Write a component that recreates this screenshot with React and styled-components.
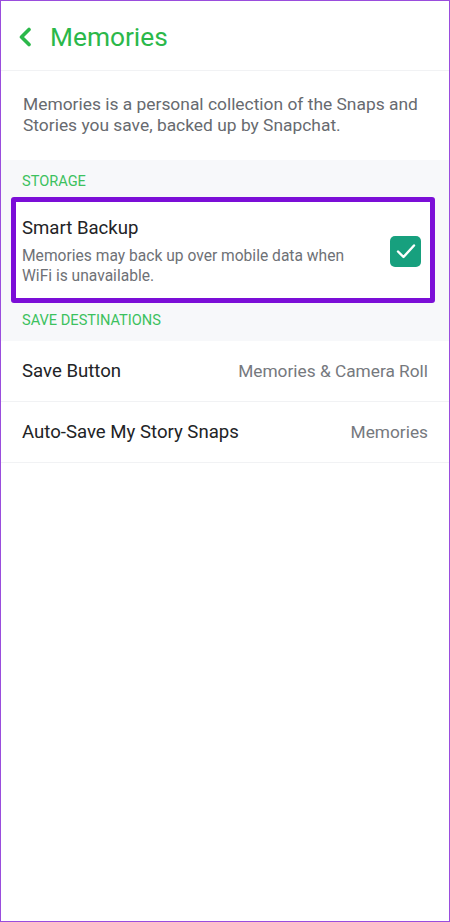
import styled, { createGlobalStyle } from "styled-components";

const GlobalStyle = createGlobalStyle`
  html, body {
    margin: 0;
    padding: 0;
    background: #ffffff;
  }
  body {
    font-family: Roboto, "Noto Sans", "Liberation Sans", sans-serif;
  }
`;

// 화면 전체 프레임
const Frame = styled.div`
  box-sizing: border-box;
  width: 450px;
  height: 922px;
  border: 1px solid #9a4ddd;
  background: #ffffff;
  overflow: hidden;
`;

const Header = styled.div`
  display: flex;
  align-items: center;
  gap: 18px;
  height: 70px;
  padding: 2px 0 0 17px;
  box-sizing: border-box;
  border-bottom: 1px solid #f1f2f4;
`;

const BackButton = styled.button`
  display: flex;
  align-items: center;
  justify-content: center;
  border: none;
  background: none;
  padding: 0;
  width: 14px;
  height: 20px;
  cursor: pointer;
`;

const Title = styled.h1`
  margin: 0;
  font-size: 26.3px;
  font-weight: 400;
  color: #2bb84a;
`;

const Description = styled.p`
  margin: 0;
  padding: 23px 20px 24px 22px;
  font-size: 17.4px;
  line-height: 21px;
  color: #676a6f;
`;

const Section = styled.div`
  background: #f7f8fa;
`;

const SectionLabel = styled.div`
  padding: ${(p) => p.$pad || "12px 0 7px 21px"};
  font-size: 14.6px;
  line-height: 18px;
  color: #3cc15e;
`;

const HighlightCard = styled.div`
  display: flex;
  align-items: center;
  margin: 0 14px 0 10px;
  padding: 14px 9px 12px 6px;
  background: #ffffff;
  border: 5px solid #7b0ed7;
  border-radius: 3px;
`;

const CardText = styled.div`
  flex: 1;
`;

const RowTitle = styled.div`
  font-size: 18.6px;
  color: #222326;
  line-height: 24px;
`;

const RowSub = styled.div`
  margin-top: 6px;
  font-size: 15.6px;
  line-height: 20px;
  color: #6e7176;
  padding-right: 24px;
`;

const Checkbox = styled.div`
  width: 31px;
  height: 31px;
  border-radius: 5px;
  background: #17a07e;
  display: flex;
  align-items: center;
  justify-content: center;
  flex-shrink: 0;
`;

const List = styled.div`
  background: #ffffff;
`;

const Row = styled.div`
  display: flex;
  align-items: center;
  justify-content: space-between;
  height: 60px;
  padding: 0 21px;
  border-bottom: 1px solid #f1f2f4;
`;

const RowLabel = styled.span`
  font-size: 18.6px;
  color: #222326;
`;

const RowValue = styled.span`
  font-size: 17.3px;
  color: #76797e;
`;

const ChevronLeft = () => (
  <svg width="14" height="20" viewBox="0 0 14 20">
    <path
      d="M11 2.5 L3.5 10 L11 17.5"
      fill="none"
      stroke="#2bb84a"
      strokeWidth="3.6"
      strokeLinecap="round"
      strokeLinejoin="round"
    />
  </svg>
);

const CheckMark = () => (
  <svg width="22" height="18" viewBox="0 0 22 18">
    <path
      d="M3 9.5 L8.5 15 L19 3.5"
      fill="none"
      stroke="#ffffff"
      strokeWidth="2.4"
      strokeLinecap="round"
      strokeLinejoin="round"
    />
  </svg>
);

const destinations = [
  { label: "Save Button", value: "Memories & Camera Roll" },
  { label: "Auto-Save My Story Snaps", value: "Memories" },
];

const App = () => {
  return (
    <>
      <GlobalStyle />
      <Frame>
        <Header>
          <BackButton aria-label="back">
            <ChevronLeft />
          </BackButton>
          <Title>Memories</Title>
        </Header>
        <Description>
          Memories is a personal collection of the Snaps and Stories you save,
          backed up by Snapchat.
        </Description>
        <Section>
          <SectionLabel>STORAGE</SectionLabel>
          <HighlightCard>
            <CardText>
              <RowTitle>Smart Backup</RowTitle>
              <RowSub>
                Memories may back up over mobile data when WiFi is unavailable.
              </RowSub>
            </CardText>
            <Checkbox>
              <CheckMark />
            </Checkbox>
          </HighlightCard>
          <SectionLabel $pad="8px 0 12px 21px">SAVE DESTINATIONS</SectionLabel>
        </Section>
        <List>
          {destinations.map((d) => (
            <Row key={d.label}>
              <RowLabel>{d.label}</RowLabel>
              <RowValue>{d.value}</RowValue>
            </Row>
          ))}
        </List>
      </Frame>
    </>
  );
};

export default App;
